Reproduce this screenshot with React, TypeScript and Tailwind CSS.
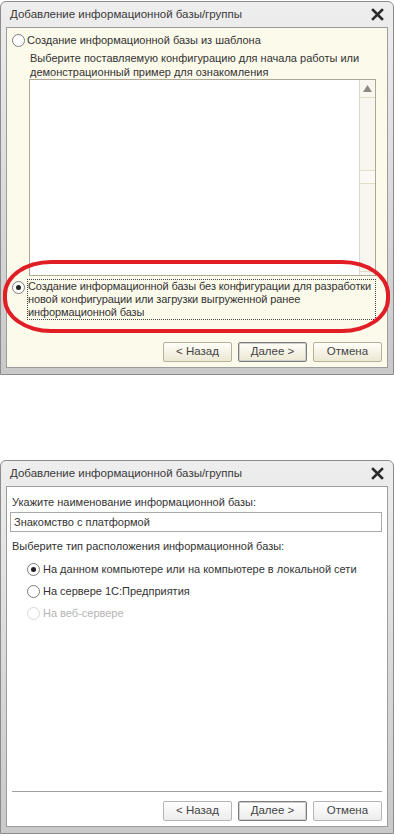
import type { ReactNode } from 'react';

const font = { fontFamily: '"Liberation Sans", Arial, sans-serif' };

function CloseIcon() {
  return (
    <svg width="13" height="13" viewBox="0 0 13 13">
      <path d="M2 2 L11 11 M11 2 L2 11" stroke="#2b2b2b" strokeWidth="2.6" strokeLinecap="square" />
    </svg>
  );
}

function Radio({ checked, disabled }: { checked?: boolean; disabled?: boolean }) {
  return (
    <span
      className={`flex h-[13px] w-[13px] shrink-0 items-center justify-center rounded-full border bg-white ${
        disabled ? 'border-[#d8d8d8]' : 'border-[#7c7c7c]'
      }`}
    >
      {checked && <span className="h-[5px] w-[5px] rounded-full bg-[#222]" />}
    </span>
  );
}

function Button({ label, focused, cream }: { label: string; focused?: boolean; cream?: boolean }) {
  return (
    <div
      className={`flex h-[20px] w-[69px] items-center justify-center rounded-[2px] border text-[11.5px] text-[#444] ${
        cream
          ? 'bg-gradient-to-b from-[#fffef8] to-[#ece8d4]'
          : 'bg-gradient-to-b from-[#ffffff] to-[#ececec]'
      } ${focused ? 'border-[#7d7d7d] shadow-[inset_0_0_0_1px_#cfcfcf]' : cream ? 'border-[#b6b19c]' : 'border-[#b4b4b4]'}`}
    >
      {label}
    </div>
  );
}

function Dialog({ children, content }: { children: ReactNode; content: string }) {
  return (
    <div className="w-[394px] rounded-t-[6px] border border-[#8c8c8c] bg-gradient-to-b from-[#eeeeee] to-[#c9c9c9] px-[5px] pb-[6px]">
      <div className="flex h-[25px] items-center justify-between pl-[4px] pr-[4px]">
        <span className="text-[11.5px] text-[#3a3a3a]">Добавление информационной базы/группы</span>
        <CloseIcon />
      </div>
      <div className={`relative h-[341px] border border-[#9c9c9c] ${content}`}>{children}</div>
    </div>
  );
}

export default function App() {
  return (
    <div className="flex min-h-[836px] flex-col bg-white pt-[1px]" style={font}>
      <Dialog content="bg-[#fcfaeb]">
        <div className="flex items-center gap-[2px] pl-[5px] pt-[5px] text-[11px] leading-[14px] text-[#333]">
          <Radio />
          <span>Создание информационной базы из шаблона</span>
        </div>
        <div className="pl-[23px] pt-[4px] text-[11px] leading-[14px] text-[#333]">
          Выберите поставляемую конфигурацию для начала работы или
          <br />
          демонстрационный пример для ознакомления
        </div>
        <div className="ml-[22px] mr-[11px] flex h-[197px] border border-[#aca894] bg-white">
          <div className="flex-1" />
          <div className="flex w-[16px] flex-col border-l border-[#dcd9c8] bg-[#f8f6ee]">
            <div className="flex h-[18px] items-center justify-center border-b border-[#e0ddcc]">
              <svg width="9" height="7" viewBox="0 0 9 7">
                <path d="M4.5 0 L9 7 L0 7 Z" fill="#8a8a80" />
              </svg>
            </div>
            <div className="h-[72px]" />
            <div className="h-[14px] border-y border-[#e0ddcc] bg-[#faf9f3]" />
            <div className="flex-1" />
            <div className="h-[4px] border-t border-[#e0ddcc]" />
          </div>
        </div>
        <div className="flex items-start gap-[2px] pl-[5px] pt-[3px] text-[11px] leading-[13px] text-[#333]">
          <span className="mt-[2px]">
            <Radio checked />
          </span>
          <span className="mr-[11px] flex-1 whitespace-nowrap border border-dotted border-[#444] tracking-[-0.1px]">
            Создание информационной базы без конфигурации для разработки
            <br />
            новой конфигурации или загрузки выгруженной ранее
            <br />
            информационной базы
          </span>
        </div>
        <div className="absolute bottom-[5px] right-[5px] flex gap-[6px]">
          <Button label="< Назад" cream />
          <Button label="Далее >" cream focused />
          <Button label="Отмена" cream />
        </div>
        <div className="absolute left-[-4px] top-[232px] h-[73px] w-[387px] rounded-[48px/34px] border-[4px] border-[#e11d26]" />
      </Dialog>

      <div className="h-[85px]" />

      <Dialog content="bg-white">
        <div className="px-[5px] pt-[8px] text-[11px] leading-[14px] text-[#333]">
          Укажите наименование информационной базы:
        </div>
        <div className="ml-[3px] mr-[5px] mt-[3px] flex h-[20px] items-center border border-[#a9a9a9] px-[3px] text-[11px] text-[#333]">
          Знакомство с платформой
        </div>
        <div className="px-[5px] pt-[7px] text-[11px] leading-[14px] text-[#333]">
          Выберите тип расположения информационной базы:
        </div>
        <div className="flex flex-col gap-[8px] pl-[20px] pt-[9px] text-[11px] leading-[14px]">
          <div className="flex items-center gap-[3px] text-[#333]">
            <Radio checked />
            <span>На данном компьютере или на компьютере в локальной сети</span>
          </div>
          <div className="flex items-center gap-[3px] text-[#333]">
            <Radio />
            <span>На сервере 1С:Предприятия</span>
          </div>
          <div className="flex items-center gap-[3px] text-[#b4b4b4]">
            <Radio disabled />
            <span>На веб-сервере</span>
          </div>
        </div>
        <div className="absolute bottom-[34px] left-[5px] right-[5px] border-t border-[#a0a0a0]" />
        <div className="absolute bottom-[5px] right-[5px] flex gap-[6px]">
          <Button label="< Назад" />
          <Button label="Далее >" focused />
          <Button label="Отмена" />
        </div>
      </Dialog>
    </div>
  );
}
